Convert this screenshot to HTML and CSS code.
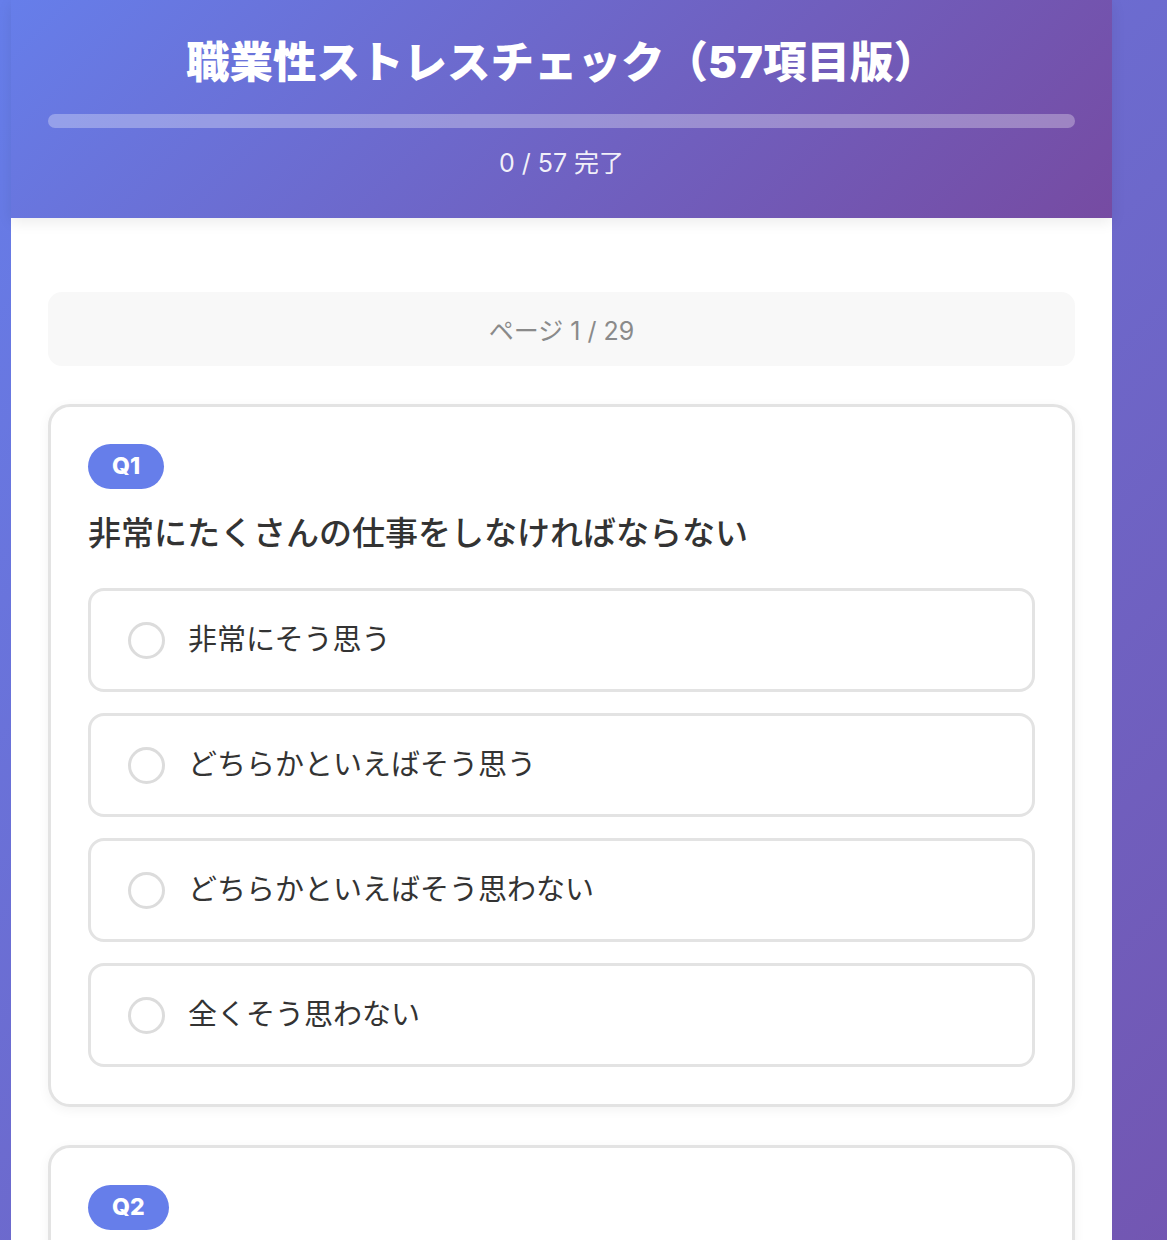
FILE: index.html
```html
<!DOCTYPE html>
<html lang="ja">
<head>
<meta charset="utf-8">
<title>職業性ストレスチェック（57項目版）</title>
<link rel="stylesheet" href="styles.css">
</head>
<body>
<div class="container">
  <header class="header">
    <h1 class="title">職業性ストレスチェック（57項目版）</h1>
    <div class="progress-bar"><div class="progress-fill" style="width:0%"></div></div>
    <div class="progress-text">0 / 57 完了</div>
  </header>
  <main class="content">
    <div class="page-indicator">ページ 1 / 29</div>

    <section class="question-card">
      <span class="badge">Q1</span>
      <p class="question-text">非常にたくさんの仕事をしなければならない</p>
      <div class="options">
        <label class="option"><span class="radio"></span><span class="option-label">非常にそう思う</span></label>
        <label class="option"><span class="radio"></span><span class="option-label">どちらかといえばそう思う</span></label>
        <label class="option"><span class="radio"></span><span class="option-label">どちらかといえばそう思わない</span></label>
        <label class="option"><span class="radio"></span><span class="option-label">全くそう思わない</span></label>
      </div>
    </section>

    <section class="question-card">
      <span class="badge">Q2</span>
      <p class="question-text">時間内に仕事が処理しきれない</p>
      <div class="options">
        <label class="option"><span class="radio"></span><span class="option-label">非常にそう思う</span></label>
        <label class="option"><span class="radio"></span><span class="option-label">どちらかといえばそう思う</span></label>
        <label class="option"><span class="radio"></span><span class="option-label">どちらかといえばそう思わない</span></label>
        <label class="option"><span class="radio"></span><span class="option-label">全くそう思わない</span></label>
      </div>
    </section>
  </main>
</div>
</body>
</html>
```

FILE: styles.css
```css
* {
  box-sizing: border-box;
}

html, body {
  margin: 0;
  padding: 0;
}

body {
  font-family: "Inter", "Noto Sans CJK JP", sans-serif;
  background: linear-gradient(135deg, #667eea 0%, #764ba2 100%);
  min-height: 100vh;
  overflow: hidden;
}

.container {
  margin-left: 11px;
  width: 1101px;
  min-height: 1240px;
  background: #ffffff;
}

.header {
  background: linear-gradient(135deg, #667eea 0%, #764ba2 100%);
  padding: 37px 37px 37px;
  box-shadow: 0 4px 14px rgba(0, 0, 0, 0.08);
  position: relative;
  z-index: 1;
}

.title {
  margin: 0;
  color: #ffffff;
  font-size: 43.5px;
  font-weight: 900;
  line-height: 50px;
  text-align: center;
  letter-spacing: 0;
}

.progress-bar {
  margin-top: 27px;
  height: 14px;
  border-radius: 7px;
  background: rgba(255, 255, 255, 0.3);
  overflow: hidden;
}

.progress-fill {
  height: 100%;
  background: #ffffff;
}

.progress-text {
  margin-top: 17px;
  color: rgba(255, 255, 255, 0.92);
  font-size: 25px;
  line-height: 36px;
  text-align: center;
}

.content {
  padding: 74px 37px 37px;
}

.page-indicator {
  height: 74px;
  background: #f8f8f8;
  border-radius: 14px;
  color: #8a8a8a;
  font-size: 25px;
  display: flex;
  align-items: center;
  justify-content: center;
  margin-bottom: 38px;
}

.question-card {
  border: 3px solid #e3e3e3;
  border-radius: 22px;
  padding: 37px;
  margin-bottom: 38px;
  box-shadow: 0 3px 12px rgba(0, 0, 0, 0.05);
  background: #ffffff;
}

.badge {
  display: inline-block;
  height: 45px;
  line-height: 45px;
  padding: 0 24px;
  border-radius: 23px;
  background: #667eea;
  color: #ffffff;
  font-size: 23px;
  font-weight: 800;
}

.question-text {
  margin: 20px 0 30px;
  font-size: 33px;
  line-height: 49px;
  font-weight: 500;
  color: #333333;
}

.options {
  display: flex;
  flex-direction: column;
  gap: 21px;
}

.option {
  display: flex;
  align-items: center;
  gap: 23px;
  height: 104px;
  padding: 0 37px;
  border: 3px solid #e3e3e3;
  border-radius: 16px;
  background: #ffffff;
}

.radio {
  width: 37px;
  height: 37px;
  border: 3px solid #dcdcdc;
  border-radius: 50%;
  flex: none;
}

.option-label {
  font-size: 29px;
  color: #333333;
  line-height: 1.4;
}
```
